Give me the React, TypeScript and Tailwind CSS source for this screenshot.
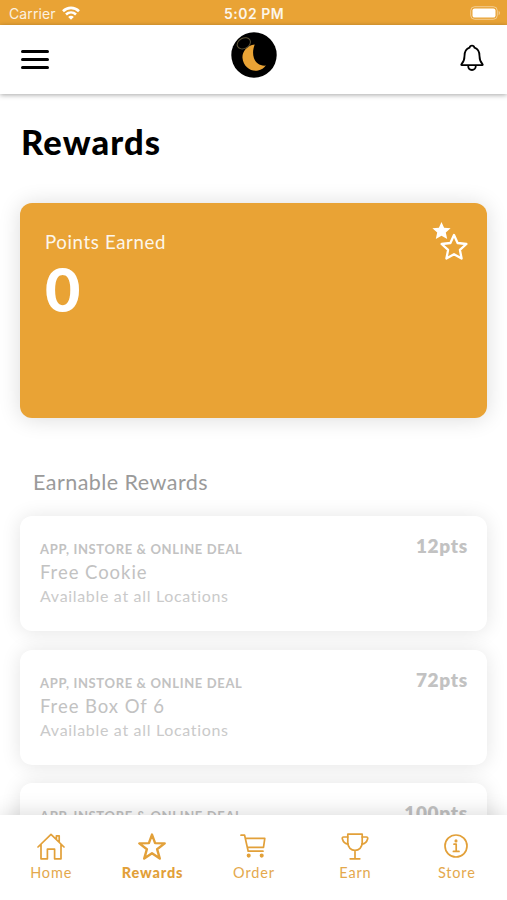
import React from 'react';

type Reward = { id: number; points: number; name?: string };

const REWARDS: Reward[] = [
  { id: 1, points: 12, name: 'Free Cookie' },
  { id: 2, points: 72, name: 'Free Box Of 6' },
  { id: 3, points: 100 },
];

const iconProps = {
  fill: 'none',
  stroke: 'currentColor',
  strokeLinecap: 'round',
  strokeLinejoin: 'round',
} as const;

const HomeIcon = () => (
  <svg width="28" height="28" viewBox="0 0 28 28" strokeWidth="1.7" {...iconProps}>
    <path d="M1 14 14 1.400l13 12.600M4 11.600v14.200h6.400V16.200h7.200v9.600H24V11.600M19.400 6.200V2.800h2.800v6.400" />
  </svg>
);

const StarIcon = () => (
  <svg width="30" height="28" viewBox="-1 0 30 28" strokeWidth="2.4" {...iconProps}>
    <path d="M14 1.600l3.100 8.500 9.600.3-7.600 5.800 2.700 9.400-7.800-5.400-7.800 5.400 2.700-9.400-7.600-5.800 9.600-.3z" />
  </svg>
);

const CartIcon = () => (
  <svg width="28" height="28" viewBox="0 0 28 28" strokeWidth="1.7" {...iconProps}>
    <path d="M2 2.200h3.600L9.200 18.200H24M6.400 5.400h19.400l-1.300 9H8.400" />
    <circle cx="9.700" cy="22.600" r="1.200" fill="currentColor" />
    <circle cx="22.700" cy="22.600" r="1.200" fill="currentColor" />
  </svg>
);

const TrophyIcon = () => (
  <svg width="28" height="28" viewBox="0 0 28 28" strokeWidth="1.7" {...iconProps}>
    <path d="M6.800 1.200h14.400v8.600c0 4.600-3.300 7.600-7.200 7.600s-7.200-3-7.200-7.600zM14 17.400v8.200M9.200 25.800h9.600" />
    <path d="M6.800 4H2.600C1.400 4 1 4.800 1.400 6c.8 3 2.400 4.800 5.800 5.200M21.200 4h4.200c1.200 0 1.600.8 1.200 2-.8 3-2.400 4.800-5.800 5.200" />
  </svg>
);

const InfoIcon = () => (
  <svg width="28" height="28" viewBox="0 0 28 28" strokeWidth="1.7" {...iconProps}>
    <circle cx="14" cy="13" r="11" />
    <path d="M12 11.200h2.200v7M11.400 18.400h5.600" />
    <circle cx="14" cy="7.900" r=".7" fill="currentColor" />
  </svg>
);

const TABS = [
  { label: 'Home', Icon: HomeIcon },
  { label: 'Rewards', Icon: StarIcon },
  { label: 'Order', Icon: CartIcon },
  { label: 'Earn', Icon: TrophyIcon },
  { label: 'Store', Icon: InfoIcon },
];

const StatusBar: React.FC = () => (
  <div className="grid h-[25px] shrink-0 grid-cols-3 items-center bg-[#e9a335] pt-0.5 pr-[6px] pl-[9px] font-['Inter',sans-serif] text-[14px] leading-5 text-white">
    <div className="flex items-center gap-[6px]">
      <span className="tracking-[0.1px] opacity-85">Carrier</span>
      <svg className="-mt-0.5" width="18" height="14" viewBox="0 0 18 14" fill="none" stroke="white" strokeWidth="2.600">
        <path d="M1 5.200c4.600-4.400 11.400-4.400 16 0M4 8.500c2.900-2.700 7.100-2.700 10 0" />
        <path d="M9 13.700 6.200 10.900c1.600-1.500 4-1.500 5.600 0z" fill="white" stroke="none" />
      </svg>
    </div>
    <span className="-ml-0.5 text-center text-[14px] font-semibold tracking-[0.5px] opacity-90">5:02 PM</span>
    <svg className="-mt-0.5 justify-self-end" width="31" height="14" viewBox="0 0 31 14">
      <rect x=".7" y=".7" width="26.600" height="12.600" rx="4" fill="none" stroke="white" strokeOpacity=".45" />
      <rect x="2.500" y="2.400" width="23" height="9.200" rx="2.200" fill="white" />
      <path d="M28.700 4.800c1.600.7 1.600 3.700 0 4.400z" fill="white" fillOpacity=".5" />
    </svg>
  </div>
);

const Header: React.FC = () => (
  <header className="z-10 grid h-[69px] shrink-0 grid-cols-3 items-center bg-white px-[21px] shadow-[0_1px_5px_rgba(0,0,0,0.35)]">
    <div className="flex w-7 flex-col gap-[5px]">
      <span className="h-[3px] rounded-sm bg-black" />
      <span className="h-[3px] rounded-sm bg-black" />
      <span className="h-[3px] rounded-sm bg-black" />
    </div>
    <svg className="mb-[9px] justify-self-center" width="46" height="46" viewBox="0 0 46 46">
      <circle cx="23" cy="23" r="22.700" fill="#000" />
      <path
        d="M23.700 12.400C15.500 13.500 11 20 11.500 26c.7 8.500 8.500 14 15.500 12.600 3.400-.7 6-2.300 7.800-5-6 .6-10.300-2.800-11.900-7.600-1.500-4.600-.8-9.600.8-13.600z"
        fill="#e9a335"
      />
      <ellipse cx="12.800" cy="11.300" rx="7" ry="5.200" transform="rotate(-28 12.800 11.300)" fill="none" stroke="#5c5338" strokeWidth="1" />
    </svg>
    <svg className="mb-[3px] justify-self-end" width="28" height="30" viewBox="0 0 28 30" strokeWidth="1.800" {...iconProps}>
      <path d="M3.800 22.200c-.6 0-.7-.7-.3-1.100 2.500-2.500 3-4.600 3-8.100 0-4 1.800-7.200 5.100-8.300.5-2.700 4.300-2.700 4.800 0 3.300 1.100 5.100 4.300 5.100 8.300 0 3.500.5 5.600 3 8.100.4.400.3 1.100-.3 1.100z" />
      <path d="M10.200 22.800c0 5.600 7.600 5.600 7.600 0" />
    </svg>
  </header>
);

const PointsCard: React.FC = () => (
  <section className="mt-[41px] flex h-[215px] items-start justify-between rounded-xl bg-[#e9a335] pl-[25px] text-white shadow-[0_1px_22px_rgba(0,0,0,0.14)]">
    <div className="pt-[27px]">
      <h2 className="text-[18.700px] leading-6 tracking-[0.600px] opacity-90">Points Earned</h2>
      <p className="mt-[3px] text-[61px] leading-16 font-black">0</p>
    </div>
    <svg className="mt-[17px] mr-[17px]" width="38" height="42" viewBox="0 0 38 42">
      <path d="M9.500 2l2.600 5.700 6.500.6-4.800 4.300 1.400 6.300-5.700-3.200-5.700 3.200 1.400-6.300L.4 8.300l6.500-.6z" fill="white" />
      <path
        d="M22 15l3.600 8 8.800 1-6.500 5.900 1.700 8.600-7.600-4.300-7.600 4.300 1.700-8.600L9.600 24l8.800-1z"
        fill="#e9a335"
        stroke="white"
        strokeWidth="2.300"
        strokeLinejoin="round"
      />
    </svg>
  </section>
);

const RewardCard: React.FC<{ reward: Reward }> = ({ reward }) => (
  <li className="flex h-[115px] shrink-0 items-start justify-between rounded-xl bg-white pr-[19px] pl-5 text-[#c2c2c2] shadow-[0_1px_20px_rgba(0,0,0,0.11)]">
    <div className="pt-6">
      <p className="text-[13px] leading-[18px] font-bold tracking-[0.650px]">APP, INSTORE &amp; ONLINE DEAL</p>
      {reward.name && (
        <>
          <h3 className="mt-0.5 text-[18.500px] leading-6 tracking-[0.950px]">{reward.name}</h3>
          <p className="mt-0.5 text-[16px] leading-5 tracking-[0.680px] text-[#cacaca]">Available at all Locations</p>
        </>
      )}
    </div>
    <span className="pt-[18px] text-[19px] leading-6 font-extrabold tracking-[0.700px]">{reward.points}pts</span>
  </li>
);

const TabBar: React.FC = () => (
  <nav className="z-10 grid h-[85px] shrink-0 grid-cols-5 bg-white pt-[18px] text-[#e2a039] shadow-[0_-2px_20px_rgba(0,0,0,0.14)]">
    {TABS.map(({ label, Icon }) => (
      <div key={label} className="flex flex-col items-center gap-[3px]">
        <Icon />
        <span
          className={
            label === 'Rewards'
              ? 'pl-px text-[14.500px] leading-[18px] font-black tracking-[0.850px]'
              : 'pl-px text-[14.500px] leading-[18px] tracking-[0.850px] opacity-90'
          }
        >
          {label}
        </span>
      </div>
    ))}
  </nav>
);

export default function App() {
  return (
    <div className="flex h-screen flex-col overflow-hidden bg-white font-['Lato',sans-serif]">
      <StatusBar />
      <Header />

      <main className="min-h-0 flex-1 overflow-hidden px-5">
        <h1 className="mt-7 ml-px text-[34.500px] leading-10 font-black tracking-[1.100px] text-black">Rewards</h1>
        <PointsCard />

        {/* Earnable rewards */}
        <h2 className="mt-[50px] ml-[13px] text-[21.500px] leading-7 tracking-[0.460px] text-[#9a9a9a]">
          Earnable Rewards
        </h2>
        <ul className="mt-5 flex flex-col gap-[18.500px]">
          {REWARDS.map(reward => (
            <RewardCard key={reward.id} reward={reward} />
          ))}
        </ul>
      </main>

      <TabBar />
    </div>
  );
}
